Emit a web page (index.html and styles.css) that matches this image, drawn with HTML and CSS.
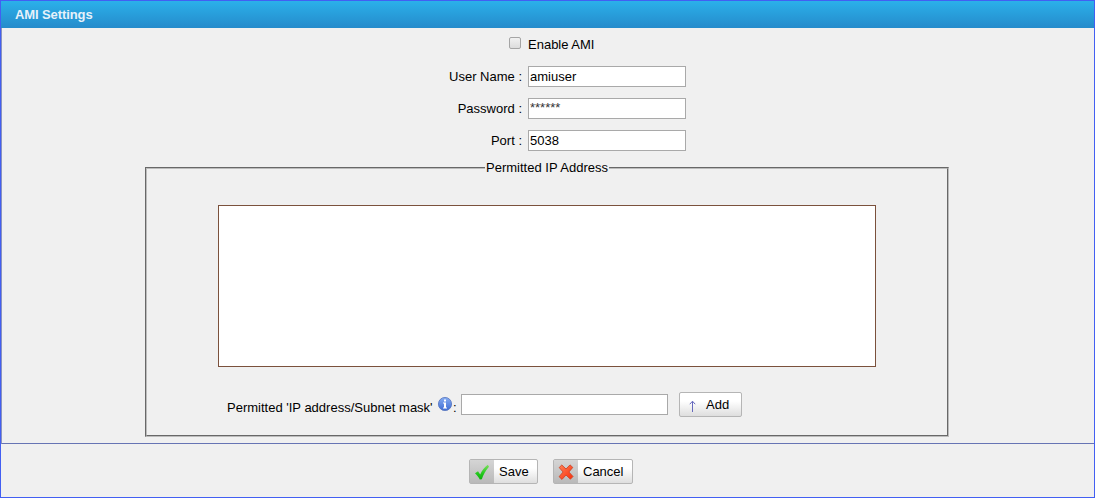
FILE: index.html
```
<!DOCTYPE html>
<html lang="en">
<head>
<meta charset="utf-8">
<title>AMI Settings</title>
<link rel="stylesheet" href="styles.css">
</head>
<body>
<form class="panel">
  <header class="title">AMI Settings</header>
  <main class="content">
    <div class="fields">
      <span class="check-cell"><input class="check" type="checkbox" id="enable"></span>
      <label class="check-label" for="enable">Enable AMI</label>
      <label class="label" for="user">User Name :</label>
      <input class="input" id="user" type="text" value="amiuser">
      <label class="label" for="pass">Password :</label>
      <input class="input stars" id="pass" type="text" value="******">
      <label class="label" for="port">Port :</label>
      <input class="input" id="port" type="text" value="5038">
    </div>
    <fieldset class="permitted">
      <legend class="legend">Permitted IP Address</legend>
      <div class="list"></div>
      <div class="add-row">
        <label class="ip-label" for="ip">Permitted 'IP address/Subnet mask'</label>
        <svg class="info" viewBox="0 0 16 16">
          <defs><linearGradient id="blue" x1="0" y1="0" x2="0" y2="1"><stop offset="0" stop-color="#86adf2"/><stop offset="1" stop-color="#3e6cd3"/></linearGradient></defs>
          <circle cx="8" cy="8" r="6.6" fill="url(#blue)" stroke="#5573bd" stroke-width=".8"/>
          <path d="M7 3.500h2v2H7zM6 6.500h3v5h1v1H6v-1h1v-4H6z" fill="#fff"/>
        </svg>
        <span class="colon">:</span>
        <input class="input ip-input" id="ip" type="text">
        <button class="btn add" type="button">
          <svg class="arrow" viewBox="0 0 9 12"><path d="M4.500 12V1.500M1.800 4.200l2.700-3 2.700 3" fill="none" stroke="#6669bd" stroke-width="1"/></svg>
          <span>Add</span>
        </button>
      </div>
    </fieldset>
  </main>
  <footer class="footer">
    <button class="btn save" type="button">
      <span class="icon-box"><svg class="icon" viewBox="0 0 16 16">
        <defs><linearGradient id="green" x1="0" y1="0" x2="0" y2="1"><stop offset="0" stop-color="#7ce05c"/><stop offset=".6" stop-color="#22c81c"/><stop offset="1" stop-color="#0cb00c"/></linearGradient></defs>
        <path d="M1 9.200L4 7.300l2.200 3.100C8 6.500 10.500 3 13.800 .8l1.200 2C11.800 6.500 9.500 10.500 7.800 15.200L5.800 15.500C4.500 13 3 11 1 9.200z" fill="url(#green)"/>
      </svg></span>
      <span class="btn-text">Save</span>
    </button>
    <button class="btn cancel" type="button">
      <span class="icon-box"><svg class="icon" viewBox="0 0 16 16">
        <defs><linearGradient id="red" x1="0" y1="0" x2="1" y2="1"><stop offset="0" stop-color="#ff8258"/><stop offset="1" stop-color="#fa2c08"/></linearGradient></defs>
        <path d="M1.200 3.500L3.800 1l4.200 4L12 .9l2.800 2.500L10.900 8l4.100 4.500-2.600 2.700L8 11l-4 4.400-2.900-2.700L5.100 8z" fill="url(#red)" stroke="#cf4628" stroke-width=".9" stroke-linejoin="round"/>
      </svg></span>
      <span class="btn-text">Cancel</span>
    </button>
  </footer>
</form>
</body>
</html>
```
FILE: styles.css
```
* { box-sizing: border-box; }
body {
  margin: 0;
  background: #f0f0f0;
  color: #000;
  font: 13px/16px "Liberation Sans", Arial, sans-serif;
}
.panel {
  display: flex;
  flex-direction: column;
  height: 498px;
  border: 1px solid #425ff2;
}
.title {
  height: 27px;
  padding-left: 14px;
  background: linear-gradient(#2bb0ea, #258bcb);
  color: #e6f1fa;
  font-size: 13px;
  font-weight: bold;
  letter-spacing: -.1px;
  line-height: 27px;
}
.content {
  height: 416px;
  padding-top: 6px;
  border-left: 1px solid #8c93bd;
  border-bottom: 1px solid #6674b4;
}
.fields {
  display: grid;
  grid-template-columns: 520px 158px;
  grid-template-rows: 21px;
  grid-auto-rows: 21px;
  column-gap: 6px;
  row-gap: 11px;
  align-items: center;
}
.label { text-align: right; }
.check-cell {
  display: flex;
  justify-content: flex-end;
  padding: 0 1px 3px 0;
}
.check {
  appearance: none;
  width: 12px;
  height: 12px;
  margin: 0;
  border: 1px solid #a5a5a5;
  border-radius: 2px;
  background: linear-gradient(#f1f1f1, #dcdcdc);
}
.input {
  width: 158px;
  height: 21px;
  padding: 1px;
  border: 1px solid #a9a9a9;
  background: #fff;
  color: #000;
  font: inherit;
}
.stars { padding-bottom: 3px; color: #333; }
.permitted {
  width: 804px;
  height: 277px;
  margin: 9px 0 0 143px;
  padding: 0 71px;
  border: 2px groove #bcbcbc;
}
.legend {
  margin: 0 auto;
  padding: 0 1px;
}
.list {
  width: 658px;
  height: 162px;
  margin-top: 29px;
  border: 1px solid #7b513c;
  background: #fff;
}
.add-row {
  display: flex;
  align-items: flex-start;
  margin-top: 25px;
  padding-left: 9px;
}
.ip-label { width: 210px; margin-top: 8px; white-space: nowrap; }
.info { width: 16px; height: 16px; margin-top: 4px; }
.colon { width: 8px; margin-top: 8px; }
.ip-input { width: 207px; margin-top: 2px; }
.btn {
  display: flex;
  align-items: center;
  height: 25px;
  padding: 0;
  border: 1px solid #b5b5b5;
  border-radius: 2px;
  background: linear-gradient(#fff 35%, #dedede);
  color: #000;
  font: inherit;
}
.add { width: 63px; margin-left: 11px; padding-left: 8px; gap: 9px; }
.arrow { width: 9px; height: 12px; margin-top: 2px; }
.footer {
  display: flex;
  gap: 15px;
  padding: 15px 0 0 468px;
}
.save { width: 69px; }
.cancel { width: 80px; }
.icon-box {
  display: flex;
  align-items: center;
  justify-content: center;
  width: 24px;
  height: 23px;
  padding-right: 1px;
  background: linear-gradient(#d5d5d5, #b9b9b9);
}
.icon { width: 16px; height: 16px; }
.btn-text { margin-left: 5px; }
```
